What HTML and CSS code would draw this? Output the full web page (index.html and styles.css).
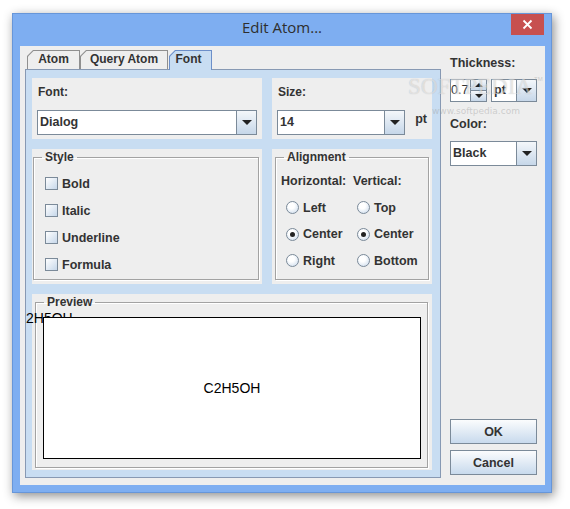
FILE: index.html
```html
<!DOCTYPE html>
<html>
<head>
<meta charset="utf-8">
<link rel="stylesheet" href="styles.css">
</head>
<body>
<div class="window">
  <div class="titlebar">
    <span class="title">Edit Atom...</span>
    <div class="close"><svg width="11" height="11" viewBox="0 0 11 11"><path d="M1.5 1.5 L9.5 9.5 M9.5 1.5 L1.5 9.5" stroke="#fff" stroke-width="1.8" fill="none"/></svg></div>
  </div>
  <div class="client">
    <div class="leftcol">
      <div class="tabs">
        <div class="tab t-atom"><span class="tab-in">Atom</span></div>
        <div class="tab t-query"><span class="tab-in">Query Atom</span></div>
        <div class="tab t-font sel"><span class="tab-in">Font</span></div>
      </div>
      <div class="panel">
        <div class="sec sec-font">
          <div class="lbl">Font:</div>
          <div class="combo c-font"><span class="ctext">Dialog</span><span class="arrowbtn"><i class="tri"></i></span></div>
        </div>
        <div class="sec sec-size">
          <div class="lbl">Size:</div>
          <div class="sizerow">
            <div class="combo c-size"><span class="ctext">14</span><span class="arrowbtn"><i class="tri"></i></span></div>
            <span class="unit">pt</span>
          </div>
        </div>
        <div class="sec sec-style">
          <fieldset class="group">
            <legend>Style</legend>
            <div class="checks">
              <label class="chk"><i class="box"></i>Bold</label>
              <label class="chk"><i class="box"></i>Italic</label>
              <label class="chk"><i class="box"></i>Underline</label>
              <label class="chk"><i class="box"></i>Formula</label>
            </div>
          </fieldset>
        </div>
        <div class="sec sec-align">
          <fieldset class="group">
            <legend>Alignment</legend>
            <div class="aligngrid">
              <div class="ahead">Horizontal:</div>
              <div class="ahead">Vertical:</div>
              <label class="rad r1"><i class="dot"></i>Left</label>
              <label class="rad r2"><i class="dot"></i>Top</label>
              <label class="rad r1"><i class="dot on"></i>Center</label>
              <label class="rad r2"><i class="dot on"></i>Center</label>
              <label class="rad r1"><i class="dot"></i>Right</label>
              <label class="rad r2"><i class="dot"></i>Bottom</label>
            </div>
          </fieldset>
        </div>
        <div class="sec sec-preview">
          <span class="overflow">2H5OH</span>
          <fieldset class="group pgroup">
            <legend>Preview</legend>
            <div class="canvas"><span class="formula">C2H5OH</span></div>
          </fieldset>
        </div>
      </div>
    </div>
    <div class="rightcol">
      <div class="lbl r-thick">Thickness:</div>
      <div class="thickrow">
        <div class="spinfield">0.7</div>
        <div class="spinbtns">
          <span class="sb"><i class="tri up"></i></span>
          <span class="sb"><i class="tri"></i></span>
        </div>
        <div class="combo c-unit"><span class="ctext">pt</span><span class="arrowbtn"><i class="tri"></i></span></div>
      </div>
      <div class="lbl r-color">Color:</div>
      <div class="combo c-color"><span class="ctext">Black</span><span class="arrowbtn"><i class="tri"></i></span></div>
      <div class="buttons">
        <button class="btn">OK</button>
        <button class="btn">Cancel</button>
      </div>
    </div>
  </div>
</div>
<div class="watermark"><span class="wm-big">SOFTPEDIA</span><span class="wm-tm">TM</span><span class="wm-small">www.softpedia.com</span></div>
</body>
</html>
```

FILE: styles.css
```css
html, body {
  margin: 0;
  padding: 0;
  background: #ffffff;
}
body {
  width: 570px;
  height: 509px;
  overflow: hidden;
  position: relative;
  font-family: "Liberation Sans", Arial, sans-serif;
  font-size: 12px;
  font-weight: bold;
  color: #333333;
}
.window {
  margin: 13px 0 0 12px;
  width: 540px;
  height: 480px;
  box-sizing: border-box;
  border: 1px solid #6796d9;
  background: #7eaef1;
  box-shadow: 2px 3px 10px rgba(0, 0, 0, 0.45);
  display: flex;
  flex-direction: column;
}
.titlebar {
  height: 32px;
  position: relative;
  text-align: center;
}
.title {
  font-family: "Open Sans", "Noto Sans", sans-serif;
  font-weight: normal;
  font-size: 15px;
  line-height: 27px;
  color: #2e2e2e;
}
.close {
  position: absolute;
  right: 7px;
  top: 0;
  width: 33px;
  height: 21px;
  background: #c7504f;
  display: flex;
  align-items: center;
  justify-content: center;
}
.client {
  margin: 0 6px 7px 7px;
  flex: 1;
  background: #eeeeee;
  display: flex;
  padding: 4px 0 7px 5px;
  box-sizing: border-box;
}
.leftcol {
  width: 416px;
  display: flex;
  flex-direction: column;
}
.tabs {
  height: 19px;
  display: flex;
  padding-left: 2px;
  position: relative;
  z-index: 2;
}
.tab {
  background: #8f8f8f;
  clip-path: polygon(6px 0, 100% 0, 100% 100%, 0 100%, 0 6px);
  padding: 1px 1px 0 1px;
  height: 19px;
  box-sizing: border-box;
}
.tab-in {
  display: block;
  height: 18px;
  background: #eeeeee;
  clip-path: polygon(5.5px 0, 100% 0, 100% 100%, 0 100%, 0 5.5px);
  line-height: 17px;
  text-align: center;
  box-sizing: border-box;
}
.t-atom { width: 53px; }
.t-query { width: 88px; }
.t-font { width: 43px; margin-left: 1px; }
.tab.sel {
  background: #6c8fc9;
  height: 20px;
}
.tab.sel .tab-in {
  background: #c8ddf2;
  height: 19px;
  padding-right: 4px;
}
.panel {
  flex: 1;
  background: #c8ddf2;
  border: 1px solid #8799b3;
  padding: 8px 8px 7px 6px;
  display: grid;
  grid-template-columns: 230px 160px;
  grid-template-rows: 61px 135px 1fr;
  gap: 10px;
}
.sec {
  background: #eeeeee;
}
.lbl {
  line-height: 14px;
}
.sec-font, .sec-size {
  padding: 7px 5px 0 5px;
}
.sec-font .lbl, .sec-size .lbl {
  padding-left: 1px;
}
.combo {
  display: flex;
  height: 25px;
  box-sizing: border-box;
  border: 1px solid #7b8a99;
  background: #ffffff;
}
.ctext {
  flex: 1;
  padding-left: 2px;
  line-height: 23px;
  font-size: 12.5px;
}
.arrowbtn {
  width: 19px;
  border-left: 1px solid #7b8a99;
  background: linear-gradient(#f4f7fa, #c6d7e9);
  display: flex;
  align-items: center;
  justify-content: center;
}
.tri {
  display: block;
  width: 0;
  height: 0;
  border-left: 5px solid transparent;
  border-right: 5px solid transparent;
  border-top: 5px solid #222222;
}
.tri.up {
  border-top: 0;
  border-bottom: 5px solid #222222;
}
.c-font {
  margin-top: 11px;
}
.sizerow {
  display: flex;
  align-items: flex-start;
  margin-top: 11px;
}
.c-size {
  width: 130px;
}
.unit {
  margin: 2px 0 0 10px;
  font-size: 12.5px;
}
.sec-style, .sec-align {
  display: flex;
}
.group {
  margin: 0;
  padding: 0;
  border: 1px solid #a2a2a2;
  box-shadow: inset 1px 1px 0 #ffffff, 1px 1px 0 #ffffff;
  min-width: 0;
  flex: 1;
}
.group legend {
  padding: 0 3px;
  margin-left: 8px;
  line-height: 14px;
}
.sec-style .group {
  margin: 1px 3px 4px 1px;
}
.sec-align .group {
  margin: 1px 3px 4px 3px;
}
.checks {
  padding: 6px 0 0 11px;
}
.chk {
  display: flex;
  align-items: center;
  height: 27px;
  font-size: 12.5px;
}
.box {
  display: block;
  width: 13px;
  height: 13px;
  box-sizing: border-box;
  border: 1px solid #7b8a99;
  background: linear-gradient(135deg, #ffffff, #c6d7ea);
  margin-right: 4px;
}
.aligngrid {
  display: grid;
  grid-template-columns: 72px 1fr;
  grid-auto-rows: 26.5px;
  padding: 4px 0 0 5px;
}
.ahead {
  line-height: 26px;
  font-size: 12.5px;
}
.rad {
  display: flex;
  align-items: center;
  font-size: 12.5px;
}
.r1 { padding-left: 5px; }
.r2 { padding-left: 4px; }
.dot {
  display: flex;
  align-items: center;
  justify-content: center;
  width: 13px;
  height: 13px;
  box-sizing: border-box;
  border: 1px solid #7b8a99;
  border-radius: 50%;
  background: radial-gradient(circle at 40% 35%, #ffffff 30%, #c6d7ea 100%);
  margin-right: 4px;
}
.dot.on::after {
  content: "";
  width: 5px;
  height: 5px;
  border-radius: 50%;
  background: #222222;
}
.sec-preview {
  grid-column: 1 / 3;
  display: flex;
  position: relative;
}
.overflow {
  position: absolute;
  left: -6px;
  top: 16px;
  font-weight: normal;
  font-size: 14px;
  line-height: 16px;
  color: #000000;
}
.pgroup {
  margin: 1px 4px 2px 3px;
  display: flex;
  flex-direction: column;
}
.canvas {
  position: relative;
  flex: 1;
  margin: 8px 6px 8px 7px;
  background: #ffffff;
  border: 1px solid #000000;
  display: flex;
  align-items: center;
  justify-content: center;
}
.formula {
  font-weight: normal;
  font-size: 14px;
  color: #000000;
}
.rightcol {
  width: 87px;
  margin: 0 0 3px 9px;
  display: flex;
  flex-direction: column;
}
.r-thick {
  margin-top: 6px;
  font-size: 12.5px;
}
.thickrow {
  display: flex;
  height: 23px;
  margin-top: 9px;
}
.spinfield {
  width: 20px;
  box-sizing: border-box;
  border: 1px solid #7b8a99;
  border-right: 0;
  background: #ffffff;
  font-weight: normal;
  font-size: 12.5px;
  line-height: 21px;
  padding-left: 0;
  overflow: hidden;
  white-space: nowrap;
}
.spinbtns {
  width: 17px;
  display: flex;
  flex-direction: column;
}
.sb {
  flex: 1;
  border: 1px solid #7b8a99;
  background: linear-gradient(#f4f7fa, #c6d7e9);
  display: flex;
  align-items: center;
  justify-content: center;
}
.sb + .sb {
  border-top: 0;
}
.sb .tri {
  border-left-width: 4px;
  border-right-width: 4px;
  border-top-width: 4px;
}
.sb .tri.up {
  border-bottom-width: 4px;
  border-top-width: 0;
}
.c-unit {
  width: 46px;
  height: 23px;
  margin-left: 4px;
}
.c-unit .ctext {
  line-height: 21px;
}
.r-color {
  margin-top: 15px;
  font-size: 12.5px;
}
.c-color {
  margin-top: 10px;
}
.buttons {
  margin-top: auto;
  display: flex;
  flex-direction: column;
  gap: 6px;
}
.btn {
  height: 25px;
  width: 87px;
  border: 1px solid #7b8a99;
  background: linear-gradient(#fbfcfd, #c8daed);
  font-family: "Liberation Sans", Arial, sans-serif;
  font-weight: bold;
  font-size: 12.5px;
  color: #333333;
  padding: 0;
}
.watermark {
  position: absolute;
  left: 408px;
  top: 75px;
  width: 150px;
  height: 50px;
  pointer-events: none;
}
.wm-big {
  position: absolute;
  left: 0;
  top: 0;
  font-family: "Liberation Serif", serif;
  font-weight: normal;
  font-size: 23px;
  line-height: 24px;
  color: rgba(255, 255, 255, 0.5);
  text-shadow: 0 0 1px rgba(0, 0, 0, 0.22);
}
.wm-tm {
  position: absolute;
  left: 126px;
  top: 1px;
  font-size: 6px;
  font-weight: normal;
  color: rgba(170, 170, 170, 0.5);
}
.wm-small {
  position: absolute;
  left: 24px;
  top: 31px;
  font-family: "DejaVu Sans", sans-serif;
  font-weight: normal;
  font-size: 9px;
  color: rgba(160, 160, 160, 0.45);
}
```
